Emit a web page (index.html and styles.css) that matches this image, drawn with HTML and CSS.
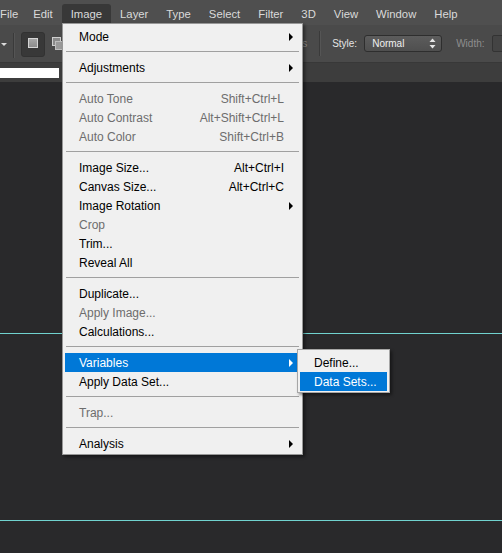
FILE: index.html
```html
<!DOCTYPE html>
<html>
<head>
<meta charset="utf-8">
<link rel="stylesheet" href="styles.css">
</head>
<body>
<div class="app">
  <div class="menubar">
    <span class="mb-item">File</span>
    <span class="mb-item">Edit</span>
    <span class="mb-item active">Image</span>
    <span class="mb-item">Layer</span>
    <span class="mb-item">Type</span>
    <span class="mb-item">Select</span>
    <span class="mb-item">Filter</span>
    <span class="mb-item">3D</span>
    <span class="mb-item">View</span>
    <span class="mb-item">Window</span>
    <span class="mb-item">Help</span>
  </div>

  <div class="optionsbar">
    <span class="tb-caret"></span>
    <span class="tb-sep"></span>
    <span class="tb-btn"><span class="sq-icon"></span></span>
    <span class="tb-icon2">
      <svg width="13" height="15" viewBox="0 0 13 15">
        <rect x="0.5" y="0.5" width="8" height="8" fill="#8a8a8a" stroke="#cfcfcf"/>
        <rect x="3.5" y="4.5" width="8" height="8" fill="#9a9a9a" stroke="#bdbdbd"/>
      </svg>
    </span>
    <div class="tb-right">
      <span class="tb-label dim">Anti-alias</span>
      <span class="tb-sep sep2"></span>
      <span class="tb-label style-label">Style:</span>
      <span class="tb-select">
        <span class="sel-text">Normal</span>
        <svg class="updown" width="7" height="11" viewBox="0 0 7 11">
          <path d="M3.5 0.5 L6.5 4 L0.5 4 Z" fill="#e6e6e6"/>
          <path d="M3.5 10.5 L6.5 7 L0.5 7 Z" fill="#e6e6e6"/>
        </svg>
      </span>
      <span class="tb-label dim width-label">Width:</span>
      <span class="tb-input"></span>
    </div>
  </div>

  <div class="tabstrip">
    <span class="tab-white"></span>
  </div>

  <div class="canvas">
    <div class="guide guide1"></div>
    <div class="guide guide2"></div>
  </div>

  <div class="menu">
    <div class="mi"><span class="lbl">Mode</span><i class="arrow"></i></div>
    <div class="sep"></div>
    <div class="mi"><span class="lbl">Adjustments</span><i class="arrow"></i></div>
    <div class="sep"></div>
    <div class="mi disabled"><span class="lbl">Auto Tone</span><span class="sc">Shift+Ctrl+L</span></div>
    <div class="mi disabled"><span class="lbl">Auto Contrast</span><span class="sc">Alt+Shift+Ctrl+L</span></div>
    <div class="mi disabled"><span class="lbl">Auto Color</span><span class="sc">Shift+Ctrl+B</span></div>
    <div class="sep"></div>
    <div class="mi"><span class="lbl">Image Size...</span><span class="sc">Alt+Ctrl+I</span></div>
    <div class="mi"><span class="lbl">Canvas Size...</span><span class="sc">Alt+Ctrl+C</span></div>
    <div class="mi"><span class="lbl">Image Rotation</span><i class="arrow"></i></div>
    <div class="mi disabled"><span class="lbl">Crop</span></div>
    <div class="mi"><span class="lbl">Trim...</span></div>
    <div class="mi"><span class="lbl">Reveal All</span></div>
    <div class="sep"></div>
    <div class="mi"><span class="lbl">Duplicate...</span></div>
    <div class="mi disabled"><span class="lbl">Apply Image...</span></div>
    <div class="mi"><span class="lbl">Calculations...</span></div>
    <div class="sep"></div>
    <div class="mi hl"><span class="lbl">Variables</span><i class="arrow"></i></div>
    <div class="mi"><span class="lbl">Apply Data Set...</span></div>
    <div class="sep"></div>
    <div class="mi disabled"><span class="lbl">Trap...</span></div>
    <div class="sep"></div>
    <div class="mi"><span class="lbl">Analysis</span><i class="arrow"></i></div>
  </div>

  <div class="submenu">
    <div class="mi"><span class="lbl">Define...</span></div>
    <div class="mi hl"><span class="lbl">Data Sets...</span></div>
  </div>
</div>
</body>
</html>
```

FILE: styles.css
```css
* { box-sizing: border-box; }

html, body {
  margin: 0;
  padding: 0;
  width: 502px;
  height: 553px;
  overflow: hidden;
  background: #29292b;
  font-family: "Liberation Sans", Arial, sans-serif;
}

.app {
  position: relative;
  width: 502px;
  height: 553px;
  display: flex;
  flex-direction: column;
}

/* ---------- menu bar ---------- */
.menubar {
  height: 25px;
  flex: none;
  display: flex;
  align-items: stretch;
  padding-top: 4px;
  background: #4f4f4f;
  white-space: nowrap;
}

.mb-item {
  flex: none;
  padding: 0 9px;
  line-height: 20px;
  font-size: 11.3px;
  color: #dadada;
}

.mb-item:first-child {
  padding-left: 0;
  padding-right: 6px;
}

.mb-item.active {
  background: #383838;
  border-radius: 3px 3px 0 0;
}

/* ---------- options bar ---------- */
.optionsbar {
  height: 38px;
  flex: none;
  display: flex;
  align-items: center;
  background: #4a4a4a;
  border-bottom: 1px solid #383838;
  white-space: nowrap;
}

.optionsbar > *,
.tb-right > * {
  flex: none;
}

.tb-caret {
  width: 0;
  height: 0;
  margin-left: 1px;
  margin-top: 2px;
  border-left: 3px solid transparent;
  border-right: 3px solid transparent;
  border-top: 3px solid #dcdcdc;
}

.tb-sep {
  width: 2px;
  height: 25px;
  margin-left: 6px;
  margin-top: 4px;
  border-left: 1px solid #3a3a3a;
  border-right: 1px solid #555;
}

.tb-btn {
  width: 24px;
  height: 25px;
  margin-left: 6px;
  margin-top: 2px;
  background: #383838;
  border: 1px solid #323232;
  border-radius: 3px;
  display: flex;
  align-items: center;
  justify-content: center;
}

.sq-icon {
  width: 10px;
  height: 10px;
  margin-top: -3px;
  border: 1px solid #d4d4d4;
  background: linear-gradient(#a6a6a6, #8c8c8c);
}

.tb-icon2 {
  margin-left: 7px;
  display: flex;
  margin-top: 1px;
}

.tb-right {
  display: flex;
  align-items: center;
  margin-left: 201px;
}

.tb-label {
  font-size: 10px;
  color: #e4e4e4;
}

.tb-label.dim { color: #8e8e8e; }

.sep2 { margin-left: 12px; margin-top: 0; }

.style-label { margin-left: 11px; }

.tb-select {
  margin-left: 7px;
  width: 78px;
  height: 17px;
  border: 1px solid #2e2e2e;
  border-radius: 3px;
  background: linear-gradient(#5c5c5c, #4f4f4f);
  display: flex;
  align-items: center;
  padding: 0 5px 0 7px;
}

.sel-text {
  flex: 1;
  font-size: 10px;
  color: #f0f0f0;
}

.updown { display: block; }

.width-label { margin-left: 14px; }

.tb-input {
  margin-left: 7px;
  width: 30px;
  height: 17px;
  background: #444;
  border: 1px solid #333;
  border-radius: 2px;
}

/* ---------- tab strip ---------- */
.tabstrip {
  height: 19px;
  flex: none;
  background: #3d3d3d;
  padding-top: 5px;
}

.tab-white {
  display: block;
  width: 59px;
  height: 10px;
  background: #ffffff;
}

/* ---------- canvas ---------- */
.canvas {
  flex: 1;
  background: #29292b;
}

.guide {
  height: 1px;
  background: #70d2cf;
}

.guide1 { margin-top: 251px; }
.guide2 { margin-top: 186px; }

/* ---------- dropdown menu ---------- */
.menu, .submenu {
  position: absolute;
  background: #f0f0f0;
  font-size: 12px;
  color: #000;
}

.menu {
  left: 62px;
  top: 23px;
  width: 241px;
  border: 1px solid #979797;
  padding: 3px 0 1px 2px;
  box-shadow: 2px 2px 3px rgba(0, 0, 0, 0.45);
}

.submenu {
  left: 297px;
  top: 349px;
  width: 93px;
  border: 1px solid #a6a6a6;
  padding: 3px 2px 1px 2px;
  box-shadow: 2px 2px 3px rgba(0, 0, 0, 0.45);
}

.mi {
  position: relative;
  height: 19px;
  display: flex;
  align-items: center;
  padding: 0 18px 0 14px;
  white-space: nowrap;
}

.mi .lbl { flex: 1; }

.mi .sc { text-align: right; }

.mi.disabled { color: #6d6d6d; }

.mi.hl {
  background: #0078d7;
  color: #ffffff;
}

.arrow {
  position: absolute;
  right: 9px;
  top: 6px;
  width: 0;
  height: 0;
  border-top: 4px solid transparent;
  border-bottom: 4px solid transparent;
  border-left: 4px solid #000;
}

.mi.hl .arrow { border-left-color: #ffffff; }

.sep {
  height: 1px;
  margin: 5px 3px 6px 1px;
  background: #a0a0a0;
}
```
